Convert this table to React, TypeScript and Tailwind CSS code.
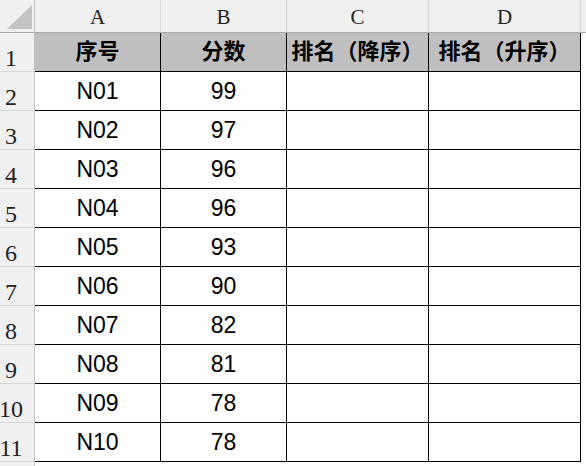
const scores = [99, 97, 96, 96, 93, 90, 82, 81, 78, 78];
const letters = ["A", "B", "C", "D"];
const titles = ["序号", "分数", "排名（降序）", "排名（升序）"];

const serif = "font-['Liberation_Serif',serif]";
const sans = "font-['Liberation_Sans','Noto_Sans_CJK_SC',sans-serif]";

const RowHead = ({ n }: { n: number }) => (
  <div
    className={`bg-[#f0f0f0] border-r border-b border-r-[#c4c4c4] border-b-[#d6d6d6] flex items-end justify-center pr-[12px] pb-[1px] text-[24px] leading-none text-[#222] ${serif}`}
  >
    {n}
  </div>
);

export default function App() {
  return (
    <div className="w-[586px] h-[466px] overflow-hidden bg-white grid grid-cols-[35px_126px_126px_142px_152px_1fr] grid-rows-[33px_repeat(11,39px)_1fr]">
      {/* corner */}
      <div className="bg-[#f0f0f0] border-r border-b border-r-[#c4c4c4] border-b-[#ababab] flex items-end justify-end pr-[2px] pb-[3px]">
        <svg width="25" height="24" viewBox="0 0 25 24">
          <polygon points="0,24 25,24 25,0" fill="#c3c3c3" />
        </svg>
      </div>
      {letters.map((l) => (
        <div
          key={l}
          className={`bg-[#f0f0f0] border-r border-b border-r-[#d4d4d4] border-b-[#ababab] flex items-end justify-center pb-[4px] text-[21px] leading-none text-[#222] ${serif}`}
        >
          {l}
        </div>
      ))}
      <div className="bg-[#f0f0f0] border-b border-b-[#ababab]" />

      {/* row 1: titles */}
      <RowHead n={1} />
      {titles.map((t) => (
        <div
          key={t}
          className={`bg-[#bfbfbf] border-r border-b border-black flex items-center justify-center text-[22px] font-bold leading-none text-black whitespace-nowrap ${sans}`}
        >
          {t}
        </div>
      ))}
      <div />

      {/* data rows */}
      {scores.map((s, i) => (
        <div key={i} className="contents">
          <RowHead n={i + 2} />
          <div className={`border-r border-b border-black flex items-center justify-center text-[23px] leading-none text-black ${sans}`}>
            N{String(i + 1).padStart(2, "0")}
          </div>
          <div className={`border-r border-b border-black flex items-center justify-center text-[23px] leading-none text-black ${sans}`}>
            {s}
          </div>
          <div className="border-r border-b border-black" />
          <div className="border-r border-b border-black" />
          <div />
        </div>
      ))}

      {/* bottom strip */}
      <div className="bg-[#f0f0f0] border-r border-r-[#c4c4c4]" />
      <div className="col-span-5" />
    </div>
  );
}
